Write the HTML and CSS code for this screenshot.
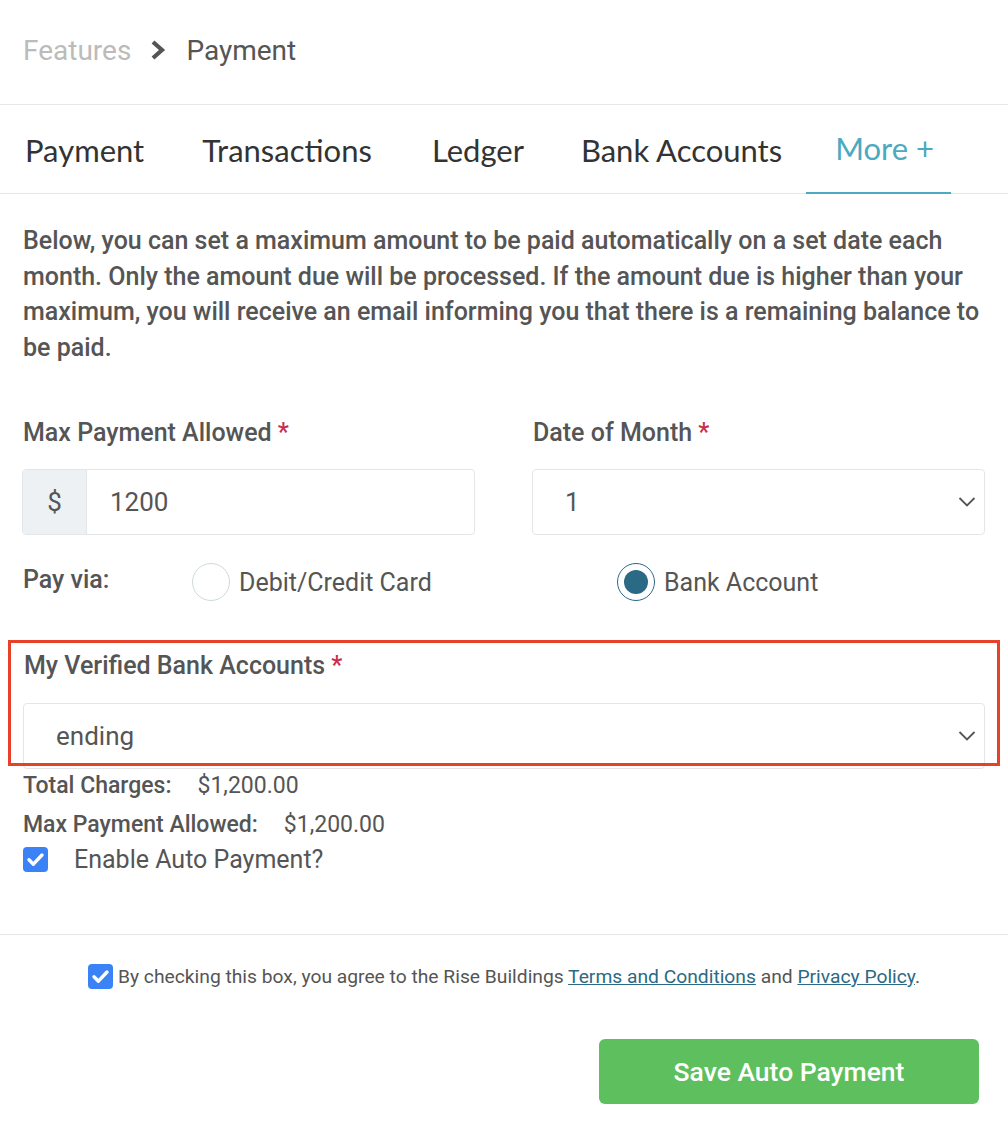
FILE: index.html
```html
<!DOCTYPE html>
<html lang="en">
<head>
<meta charset="utf-8">
<title>Payment</title>
<link rel="stylesheet" href="styles.css">
</head>
<body>
<div class="page">
  <nav class="breadcrumb">
    <span class="crumb-muted">Features</span>
    <svg class="crumb-sep" width="16" height="20" viewBox="0 0 16 20"><path d="M3 2 L12 10 L3 18" fill="none" stroke="#555" stroke-width="4.2" stroke-linejoin="miter"/></svg>
    <span class="crumb-current">Payment</span>
  </nav>

  <ul class="tabs">
    <li class="tab">Payment</li>
    <li class="tab">Transactions</li>
    <li class="tab">Ledger</li>
    <li class="tab">Bank Accounts</li>
    <li class="tab tab-active">More +</li>
  </ul>

  <main class="content">
    <p class="intro">Below, you can set a maximum amount to be paid automatically on a set date each month. Only the amount due will be processed. If the amount due is higher than your maximum, you will receive an email informing you that there is a remaining balance to be paid.</p>

    <div class="row-two">
      <div class="field">
        <label class="label">Max Payment Allowed <span class="req">*</span></label>
        <div class="input-group">
          <span class="addon">$</span>
          <span class="input-value">1200</span>
        </div>
      </div>
      <div class="field">
        <label class="label">Date of Month <span class="req">*</span></label>
        <div class="select">
          <span class="select-value">1</span>
          <svg class="chev" width="18" height="12" viewBox="0 0 18 12"><path d="M1.5 2 L9 9.5 L16.5 2" fill="none" stroke="#555" stroke-width="1.8"/></svg>
        </div>
      </div>
    </div>

    <div class="payvia">
      <span class="payvia-label">Pay via:</span>
      <span class="radio-opt opt1"><span class="radio"></span>Debit/Credit Card</span>
      <span class="radio-opt opt2"><span class="radio radio-on"></span>Bank Account</span>
    </div>

    <div class="bank-block">
      <label class="label">My Verified Bank Accounts <span class="req">*</span></label>
      <div class="select select-wide">
        <span class="select-value">ending</span>
        <svg class="chev" width="18" height="12" viewBox="0 0 18 12"><path d="M1.5 2 L9 9.5 L16.5 2" fill="none" stroke="#555" stroke-width="1.8"/></svg>
      </div>
      <div class="highlight"></div>
    </div>

    <div class="summary">
      <div class="sum-row"><span class="sum-key">Total Charges:</span><span class="sum-val">$1,200.00</span></div>
      <div class="sum-row"><span class="sum-key">Max Payment Allowed:</span><span class="sum-val">$1,200.00</span></div>
    </div>

    <div class="enable">
      <span class="check"><svg width="25" height="25" viewBox="0 0 25 25"><path d="M6 12.8 L10.4 17.2 L19 8" fill="none" stroke="#fff" stroke-width="3.4" stroke-linecap="round" stroke-linejoin="round"/></svg></span>
      <span class="enable-text">Enable Auto Payment?</span>
    </div>
  </main>

  <footer class="footer">
    <div class="agree">
      <span class="check"><svg width="25" height="25" viewBox="0 0 25 25"><path d="M6 12.8 L10.4 17.2 L19 8" fill="none" stroke="#fff" stroke-width="3.4" stroke-linecap="round" stroke-linejoin="round"/></svg></span>
      <span class="agree-text">By checking this box, you agree to the Rise Buildings <a href="#">Terms and Conditions</a> and <a href="#">Privacy Policy</a>.</span>
    </div>
    <div class="actions">
      <button class="btn-save" type="button">Save Auto Payment</button>
    </div>
  </footer>
</div>
</body>
</html>
```

FILE: styles.css
```css
* { box-sizing: border-box; }
html, body { margin: 0; padding: 0; background: #fff; }
body { font-family: Roboto, "Liberation Sans", Arial, sans-serif; color: #555; }
.page { width: 1008px; }

.breadcrumb {
  display: flex;
  align-items: center;
  height: 105px;
  padding: 0 0 4px 23px;
  font-size: 28px;
  border-bottom: 1px solid #e4e8e8;
}
.crumb-muted { color: #bbb; }
.crumb-sep { margin: 0 20px 0 19px; }
.crumb-current { color: #555; }

.tabs {
  list-style: none;
  margin: 0;
  padding: 0;
  display: flex;
  height: 89px;
  border-bottom: 1px solid #e4e8e8;
  font-family: Lato, "Open Sans", sans-serif;
  font-size: 31px;
  color: #333;
}
.tab {
  padding: 0 29px;
  display: flex;
  align-items: center;
  margin-bottom: -1px;
}
.tab:first-child { padding-left: 25px; }
.tab:nth-child(2) { padding-right: 31px; }
.tab:nth-child(3) { padding-right: 28px; }
.tab-active {
  color: #4ba9c1;
  border-bottom: 2px solid #4ba9c1;
  padding: 0 17px 2px 29px;
  margin-left: -5px;
}

.content { padding: 0 23px 0 23px; }
.intro {
  margin: 29px 0 0 0;
  font-size: 25px;
  font-weight: 500;
  line-height: 35.5px;
  color: #555;
}

.row-two {
  display: grid;
  grid-template-columns: 453px 453px;
  column-gap: 57px;
  margin-top: 53px;
  margin-left: -1px;
}
.label {
  display: block;
  font-size: 25px;
  font-weight: 500;
  color: #555;
  line-height: 30px;
  padding-left: 1px;
}
.req { color: #c8304e; }

.input-group {
  margin-top: 21px;
  display: flex;
  height: 66px;
  border: 1px solid #e3e6e8;
  border-radius: 4px;
  overflow: hidden;
}
.addon {
  width: 64px;
  background: #eef1f3;
  border-right: 1px solid #e3e6e8;
  display: flex;
  align-items: center;
  justify-content: center;
  font-size: 26px;
  color: #555;
}
.input-value {
  display: flex;
  align-items: center;
  padding-left: 23px;
  font-size: 26px;
  color: #555;
}

.select {
  margin-top: 21px;
  display: flex;
  align-items: center;
  justify-content: space-between;
  height: 66px;
  border: 1px solid #e3e6e8;
  border-radius: 4px;
  padding: 0 8px 0 32px;
  font-size: 26px;
  color: #555;
}
.chev { display: block; }

.payvia {
  display: flex;
  align-items: center;
  height: 40px;
  margin-top: 27px;
  font-size: 25px;
}
.payvia-label { font-weight: 500; width: 169px; margin-top: -6px; }
.radio-opt { display: flex; align-items: center; color: #555; }
.opt1 { width: 425px; }
.radio {
  width: 38px;
  height: 38px;
  border-radius: 50%;
  border: 1px solid #cfdadd;
  margin-right: 9px;
  position: relative;
  flex: none;
}
.radio-on { border-color: #2b6a85; }
.radio-on::after {
  content: "";
  position: absolute;
  left: 6px;
  top: 6px;
  width: 24px;
  height: 24px;
  border-radius: 50%;
  background: #2b6a85;
}

.bank-block {
  position: relative;
  margin: 38px 0 0 0;
  padding-top: 11px;
  height: 126px;
}
.bank-block .select { margin-top: 22px; padding-left: 32px; }
.highlight {
  position: absolute;
  left: -15px;
  right: -15px;
  top: 0;
  bottom: 0;
  border: 3px solid #e8412a;
  pointer-events: none;
}

.summary { margin-top: 0; }
.sum-row { display: flex; font-size: 23px; line-height: 39px; }
.sum-key { font-weight: 500; margin-right: 26px; }

.enable { display: flex; align-items: center; margin-top: 1px; }
.check {
  width: 25px;
  height: 25px;
  border-radius: 4px;
  background: #3b82f6;
  display: inline-block;
  flex: none;
}
.check svg { display: block; }
.enable-text { font-size: 25px; margin-left: 26px; color: #555; }

.footer { margin-top: 60px; border-top: 1px solid #e4e8e8; }
.agree {
  display: flex;
  align-items: center;
  justify-content: center;
  margin-top: 29px;
}
.agree .check { margin-right: 5px; }
.agree-text { font-size: 19.25px; color: #555; }
.agree-text a { color: #2b6a85; text-decoration: underline; }

.actions { display: flex; justify-content: flex-end; padding: 50px 29px 25px 0; }
.btn-save {
  width: 380px;
  height: 65px;
  background: #5dbf5e;
  border: none;
  border-radius: 6px;
  color: #fff;
  font-family: Roboto, "Liberation Sans", sans-serif;
  font-size: 26.5px;
  font-weight: 500;
}
```
